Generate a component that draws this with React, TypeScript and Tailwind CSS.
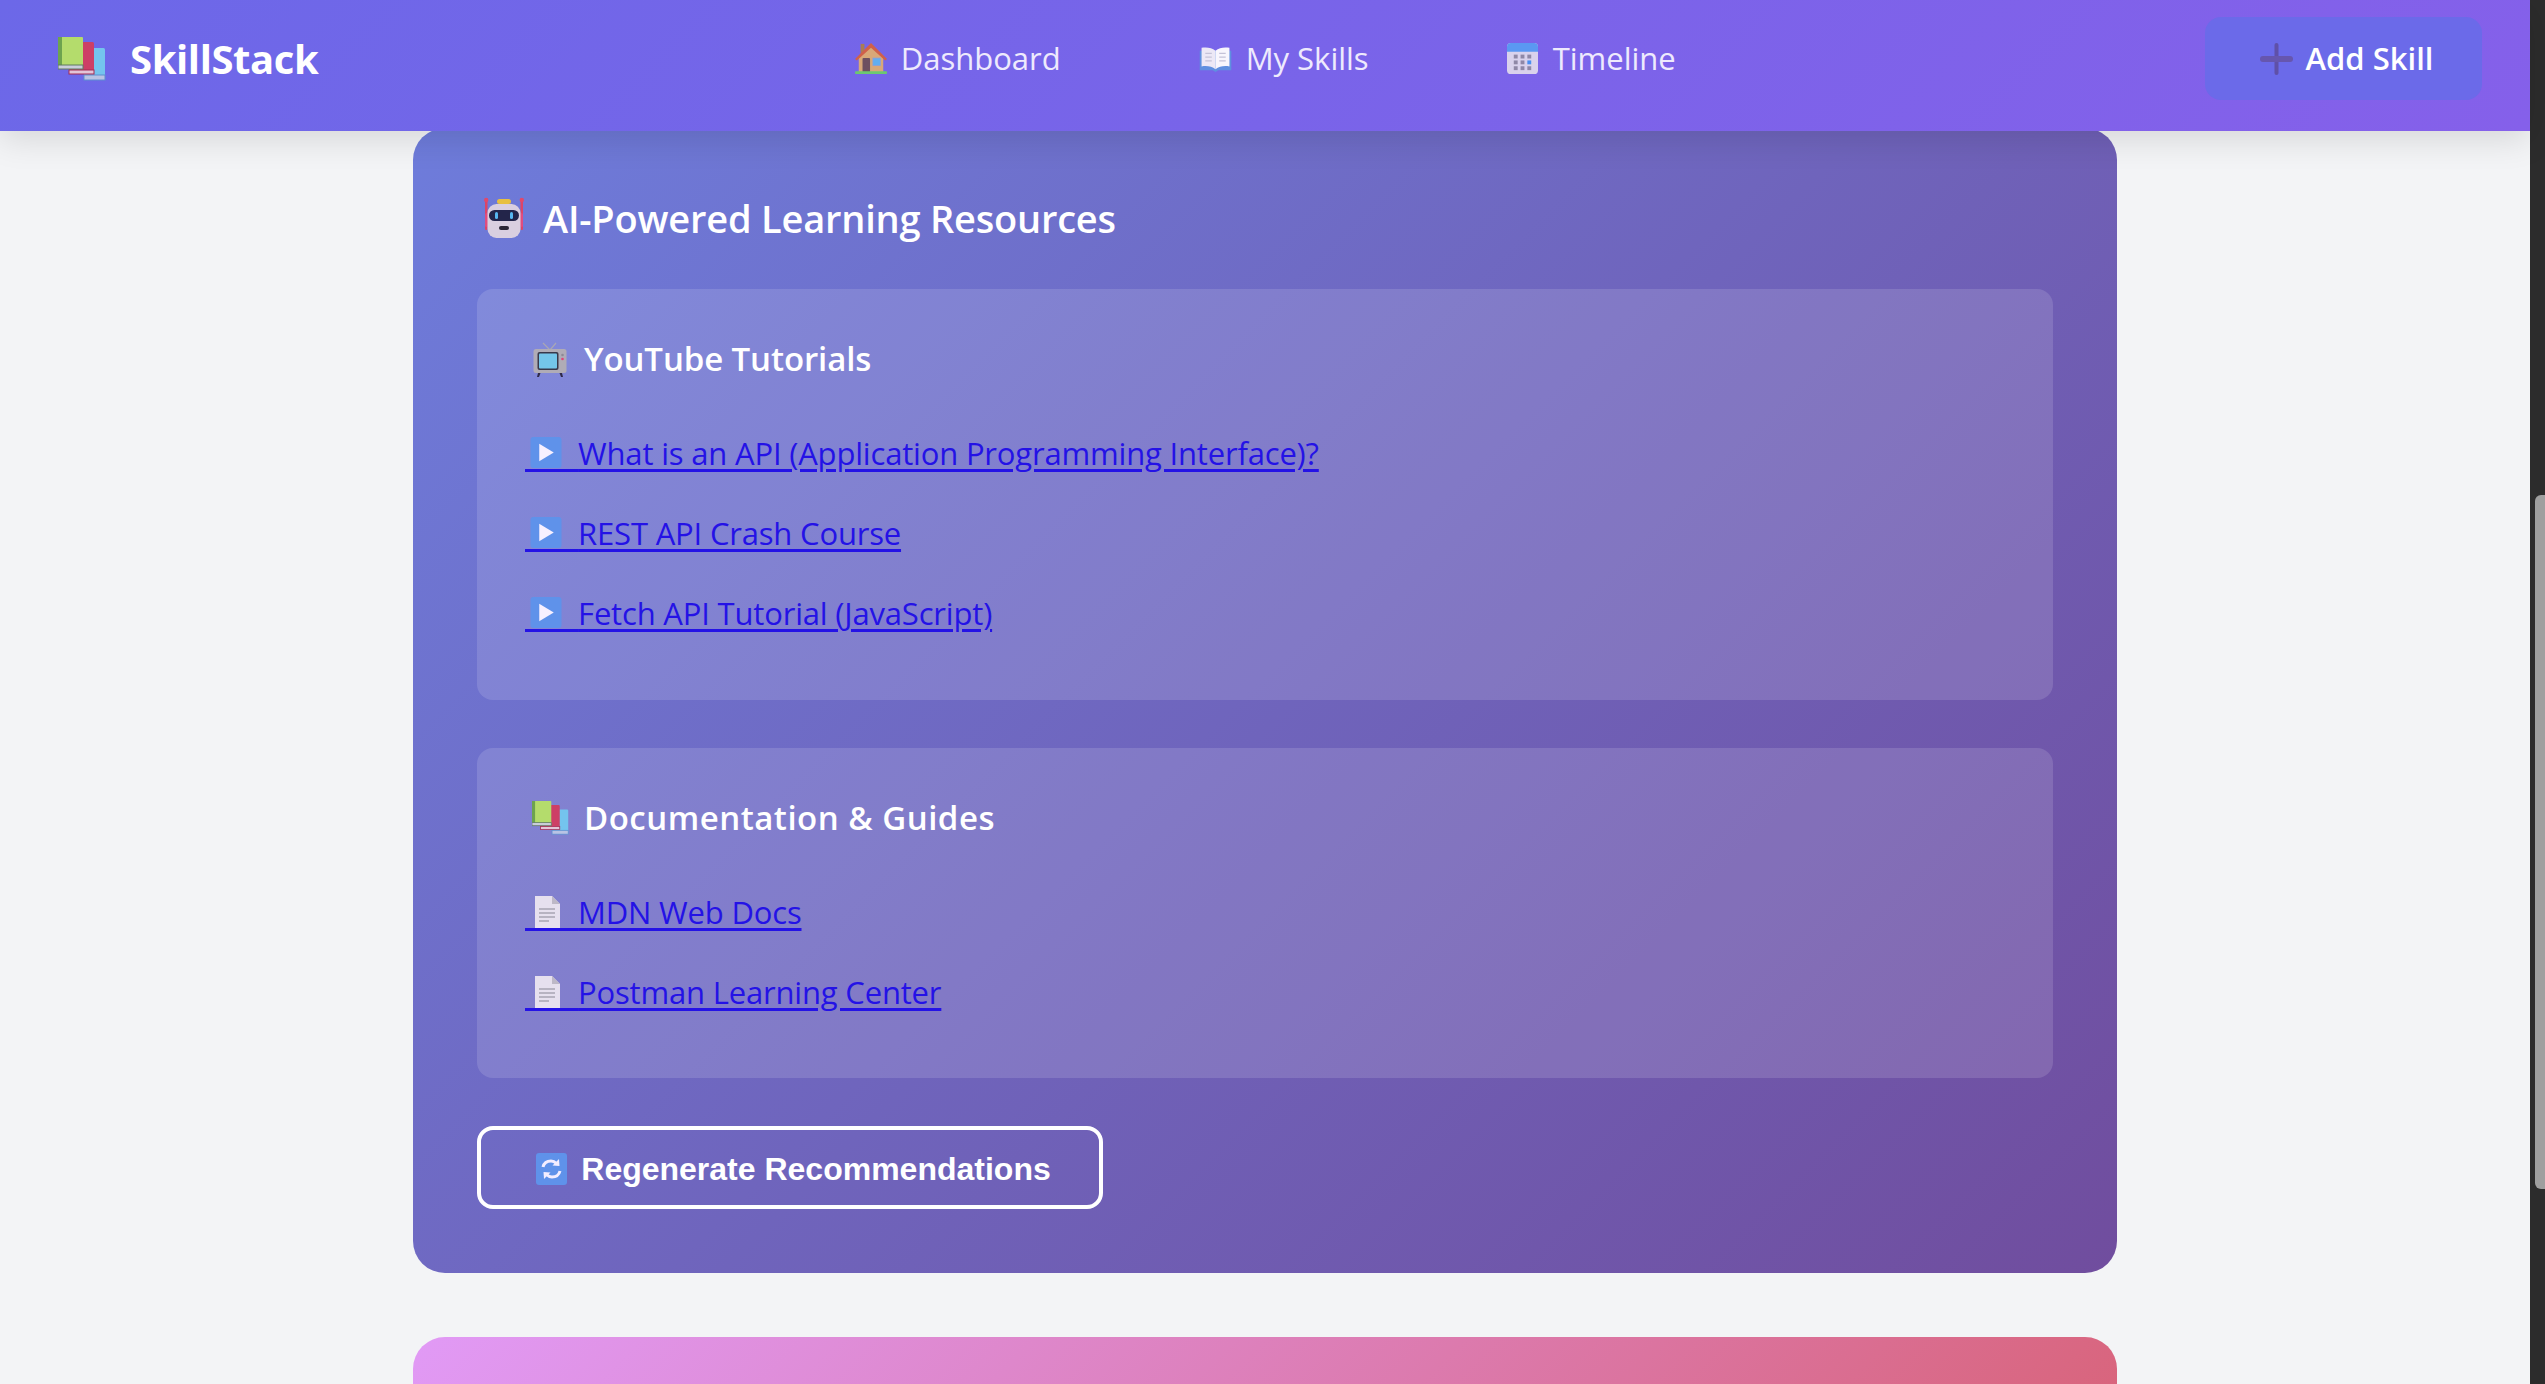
type IconProps = { className?: string };

function Books({ className }: IconProps) {
  return (
    <svg viewBox="0 0 48 44" className={className}>
      <rect x="26" y="11" width="21" height="30" rx="1.500" fill="#74c4ee" />
      <rect x="26" y="38" width="21" height="5" fill="#b9c3e4" stroke="#5d8fd0" strokeWidth="1" />
      <rect x="11" y="5" width="25" height="31" rx="1.500" fill="#cd3f66" />
      <rect x="11" y="33" width="25" height="4" fill="#e3c5d8" stroke="#a52a55" strokeWidth="1" />
      <rect x="0" y="0" width="25" height="31" rx="1" fill="#b4dc6c" />
      <rect x="0" y="0" width="4" height="31" fill="#6da34f" />
      <rect x="0" y="28" width="25" height="4" fill="#c9cdda" stroke="#5f7a60" strokeWidth="1" />
    </svg>
  );
}

function House({ className }: IconProps) {
  return (
    <svg viewBox="0 0 34 34" className={className}>
      <rect x="6" y="1" width="4" height="12" fill="#a97c55" />
      <path d="M4 14 17 3l13 11v17H4z" fill="#d8a878" />
      <path d="M0 17 17 0l17 17-2 1.500L17 5 2 18.500z" fill="#d0604a" />
      <rect x="8" y="16" width="8" height="15" rx="1" fill="#6d5060" />
      <rect x="19" y="16" width="8" height="8" fill="#62aef0" stroke="#8f9ed8" strokeWidth="0.8" />
      <rect x="0" y="30" width="34" height="3" rx="1" fill="#6cc870" />
    </svg>
  );
}

function OpenBook({ className }: IconProps) {
  return (
    <svg viewBox="0 0 34 28" className={className}>
      <path d="M0 5h34v21H20l-3 2-3-2H0z" fill="#5f8fe0" />
      <path d="M2 2c6-1 11 0 15 3v20c-4-3-9-4-15-3z" fill="#ece8f6" />
      <path d="M32 2c-6-1-11 0-15 3v20c4-3 9-4 15-3z" fill="#f8f6fd" />
      <path d="M6 8h7M6 12h7M6 16h7M21 8h7M21 12h7M21 16h7" stroke="#c4c2d8" strokeWidth="1.200" />
    </svg>
  );
}

function Calendar({ className }: IconProps) {
  return (
    <svg viewBox="0 0 32 32" className={className}>
      <rect x="0" y="0" width="32" height="32" rx="4" fill="#d9d2ec" />
      <path d="M0 9V4a4 4 0 0 1 4-4h24a4 4 0 0 1 4 4v5z" fill="#5a98f2" />
      <g fill="#8f88a6">
        <rect x="7" y="12" width="4" height="4" />
        <rect x="14" y="12" width="4" height="4" />
        <rect x="21" y="12" width="4" height="4" />
        <rect x="7" y="18" width="4" height="4" />
        <rect x="14" y="18" width="4" height="4" />
        <rect x="7" y="24" width="4" height="4" />
        <rect x="14" y="24" width="4" height="4" />
        <rect x="21" y="24" width="4" height="4" />
      </g>
      <rect x="21" y="18" width="4" height="4" fill="#4a8ff0" />
    </svg>
  );
}

function Plus({ className }: IconProps) {
  return (
    <svg viewBox="0 0 33 32" className={className}>
      <rect x="14.500" y="0" width="4" height="32" rx="2" fill="#5f50a8" />
      <rect x="0" y="13" width="33" height="6" rx="3" fill="#6656ae" />
    </svg>
  );
}

function Robot({ className }: IconProps) {
  return (
    <svg viewBox="0 0 40 42" className={className}>
      <rect x="1" y="3" width="2.500" height="30" rx="1" fill="#dc4468" />
      <rect x="36.500" y="3" width="2.500" height="30" rx="1" fill="#dc4468" />
      <circle cx="2.200" cy="3" r="2.200" fill="#e0486c" />
      <circle cx="37.800" cy="3" r="2.200" fill="#e0486c" />
      <rect x="1" y="16" width="3" height="14" rx="1.500" fill="#e04c80" />
      <rect x="36" y="16" width="3" height="14" rx="1.500" fill="#e04c80" />
      <rect x="13" y="2" width="14" height="5" rx="2.500" fill="#e8c040" />
      <rect x="3.500" y="7" width="33" height="34" rx="9" fill="#d9cfe0" />
      <rect x="5" y="13" width="30" height="11" rx="5.500" fill="#23254a" />
      <rect x="11" y="15" width="3" height="7" rx="1.500" fill="#57b6f0" />
      <rect x="26" y="15" width="3" height="7" rx="1.500" fill="#57b6f0" />
      <rect x="15" y="29" width="10" height="4" rx="2" fill="#2a2536" />
    </svg>
  );
}

function Tv({ className }: IconProps) {
  return (
    <svg viewBox="0 0 34 36" className={className}>
      <path d="M17 9 10 2M17 9l6-7" stroke="#a9a6b4" strokeWidth="1.200" fill="none" />
      <path d="m6 28-2 8h2l3-8zM28 28l2 8h-2l-3-8z" fill="#2f2a4a" />
      <rect x="0.500" y="8" width="33" height="24" rx="2.500" fill="#b0acb6" />
      <rect x="4.500" y="11" width="21" height="18" rx="2" fill="#39384a" />
      <rect x="6" y="12.500" width="18" height="15" rx="1" fill="#74c6ea" />
      <circle cx="29.500" cy="14" r="1.300" fill="#8e8a96" />
      <circle cx="29.500" cy="18" r="1.300" fill="#e0447a" />
    </svg>
  );
}

function PlayBox({ className }: IconProps) {
  return (
    <svg viewBox="0 0 32 32" className={className}>
      <rect x="0" y="0" width="32" height="32" rx="3" fill="#5f92ea" />
      <path d="M9 7v18l15-9z" fill="#f7f0ff" />
    </svg>
  );
}

function PageIcon({ className }: IconProps) {
  return (
    <svg viewBox="0 0 25 32" className={className}>
      <path d="M0 0h17l8 8v24H0z" fill="#e6e0ee" />
      <path d="M17 0l8 8h-8z" fill="#bdb8c6" />
      <path d="M4 13h16M4 17h16M4 21h16M4 25h10" stroke="#a8a4b2" strokeWidth="1.500" />
    </svg>
  );
}

function RefreshBox({ className }: IconProps) {
  return (
    <svg viewBox="0 0 31 32" className={className}>
      <rect x="0" y="0" width="31" height="32" rx="3" fill="#5f92ea" />
      <path d="M7 14c1-4 4-6 8-6 2.500 0 4 1 5.500 2.500" stroke="#f3edff" strokeWidth="3" fill="none" />
      <path d="m23 6 .5 7-7-.5z" fill="#f3edff" />
      <path d="M24 18c-1 4-4 6-8 6-2.500 0-4-1-5.500-2.500" stroke="#f3edff" strokeWidth="3" fill="none" />
      <path d="m8 26-.5-7 7 .5z" fill="#f3edff" />
    </svg>
  );
}

const youtube = [
  "What is an API (Application Programming Interface)?",
  "REST API Crash Course",
  "Fetch API Tutorial (JavaScript)",
];

const docs = ["MDN Web Docs", "Postman Learning Center"];

function ResourceLink({ label, kind }: { label: string; kind: "play" | "page" }) {
  return (
    <a
      href="#"
      className="relative block w-fit text-[31px] leading-[40px] tracking-[-0.18px] text-[#2412e6] underline decoration-[3px] underline-offset-[4px]"
    >
      {kind === "play" ? (
        <PlayBox className="absolute left-[5px] top-[4px] h-[31px] w-[32px]" />
      ) : (
        <PageIcon className="absolute left-[10px] top-[4px] h-[32px] w-[25px]" />
      )}
      <span className="tracking-[45px]">&nbsp;</span>
      {label}
    </a>
  );
}

export default function App() {
  return (
    <div className="flex h-[1384px] w-[2545px] overflow-hidden bg-[#f3f4f6] font-['Open_Sans',sans-serif]">
      <div className="flex w-[2530px] flex-col">
        <header className="relative z-10 flex h-[131px] shrink-0 items-center justify-between bg-[linear-gradient(135deg,#6c68e8,#8560ea)] pb-[14px] pl-[58px] pr-[48px] shadow-[0_8px_32px_rgba(0,0,0,0.12)]">
          <div className="flex items-center gap-[24px]">
            <Books className="h-[44px] w-[48px]" />
            <span className="text-[40px] font-bold leading-none tracking-[-0.4px] text-white">
              SkillStack
            </span>
          </div>

          <nav className="ml-[6px] flex items-center gap-[138px] text-[31px] font-medium leading-none text-[#eeeafd]">
            <a className="flex items-center gap-[13px]">
              <House className="h-[32px] w-[34px]" />
              Dashboard
            </a>
            <a className="flex items-center gap-[14px]">
              <OpenBook className="h-[26px] w-[33px]" />
              My Skills
            </a>
            <a className="flex items-center gap-[15px]">
              <Calendar className="h-[31px] w-[31px]" />
              Timeline
            </a>
          </nav>

          <button className="flex h-[83px] w-[277px] items-center justify-center gap-[13px] rounded-[16px] bg-[#6b6ae9] pl-[6px] text-[31px] font-semibold text-white">
            <Plus className="h-[32px] w-[33px]" />
            Add Skill
          </button>
        </header>

        <main className="mt-[-3px] flex flex-col items-center gap-[64px]">
          <section className="w-[1704px] rounded-[32px] bg-[linear-gradient(135deg,#6e7cdb,#704d9e)] p-[64px]">
            <h2 className="mt-[2px] flex h-[48px] items-center gap-[19px] pl-[7px] text-[38px] font-semibold tracking-[-0.2px] text-white">
              <Robot className="h-[42px] w-[40px]" />
              AI-Powered Learning Resources
            </h2>

            <div className="mt-[47px] flex flex-col gap-[48px]">
              <div className="h-[411px] rounded-[16px] bg-white/[0.13] px-[48px] pt-[48px]">
                <h3 className="flex h-[44px] items-center gap-[17px] pl-[8px] text-[33px] font-semibold tracking-[-0.1px] text-white">
                  <Tv className="h-[36px] w-[34px]" />
                  YouTube Tutorials
                </h3>
                <div className="mt-[52px] flex flex-col gap-[40px]">
                  {youtube.map((title) => (
                    <ResourceLink key={title} label={title} kind="play" />
                  ))}
                </div>
              </div>

              <div className="h-[330px] rounded-[16px] bg-white/[0.13] px-[48px] pt-[48px]">
                <h3 className="flex h-[44px] items-center gap-[15px] pl-[7px] text-[33px] font-semibold tracking-[0.5px] text-white">
                  <Books className="h-[34px] w-[37px]" />
                  Documentation &amp; Guides
                </h3>
                <div className="mt-[52px] flex flex-col gap-[40px]">
                  {docs.map((title) => (
                    <ResourceLink key={title} label={title} kind="page" />
                  ))}
                </div>
              </div>
            </div>

            <button className="mt-[48px] flex h-[83px] w-[626px] items-center justify-center gap-[14px] rounded-[16px] border-4 border-white pl-[7px] pt-[2px] font-['Liberation_Sans',sans-serif] text-[32px] font-bold text-white">
              <RefreshBox className="h-[32px] w-[31px]" />
              Regenerate Recommendations
            </button>
          </section>

          <section className="h-[600px] w-[1704px] shrink-0 rounded-[32px] bg-[linear-gradient(135deg,#e19af6,#d65457)]" />
        </main>
      </div>

      <div className="w-[15px] shrink-0 bg-[#2c2c2c] pl-[5px] pt-[495px]">
        <div className="h-[694px] w-[10px] rounded-l-[6px] bg-[#9f9f9f]" />
      </div>
    </div>
  );
}
